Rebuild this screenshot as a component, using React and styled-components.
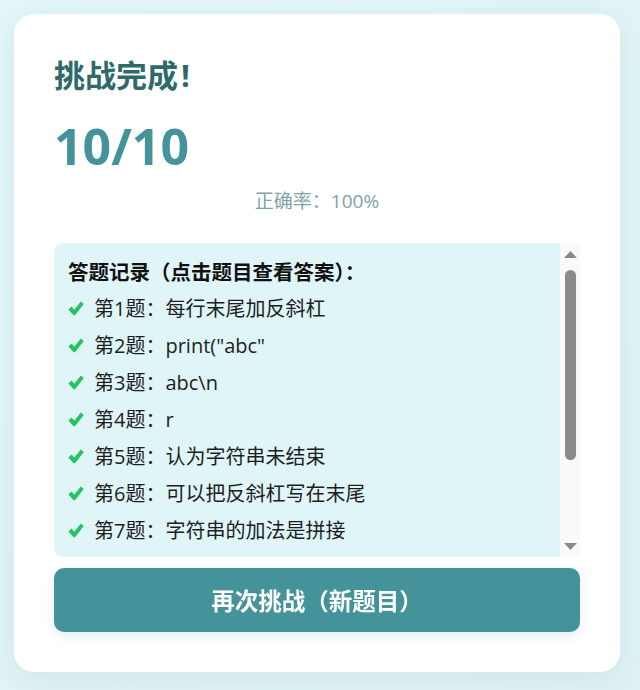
import React from "react";
import styled, { createGlobalStyle } from "styled-components";

const Global = createGlobalStyle`
  html, body { margin: 0; padding: 0; }
  body {
    background: linear-gradient(135deg, #e4f5f6 0%, #dff2f3 100%);
    font-family: "Open Sans", "Noto Sans CJK SC", sans-serif;
    min-height: 690px;
  }
`;

const Page = styled.div`
  padding: 14px 20px 18px 14px;
  box-sizing: border-box;
`;

const Card = styled.div`
  background: #ffffff;
  border-radius: 20px;
  padding: 40px;
  box-shadow: 0 6px 24px rgba(70, 150, 155, 0.12);
  display: flex;
  flex-direction: column;
`;

const Title = styled.h2`
  margin: 0;
  font-size: 31px;
  line-height: 42px;
  font-weight: 700;
  color: #2f6a6b;
`;

const Bang = styled.span`
  margin-left: 3px;
`;

const Score = styled.div`
  margin-top: 18px;
  font-size: 50px;
  line-height: 64px;
  font-weight: 700;
  color: #45939a;
`;

const Rate = styled.div`
  margin-top: 9px;
  text-align: center;
  font-size: 19px;
  line-height: 28px;
  color: #7fa3a6;
`;

const Records = styled.div`
  margin-top: 28px;
  height: 314px;
  display: flex;
`;

const List = styled.div`
  flex: 1;
  min-width: 0;
  overflow-y: auto;
  scrollbar-width: none;
  background: #dff5f7;
  border-radius: 10px 0 0 10px;
  padding: 14px;
  box-sizing: border-box;
`;

const Rail = styled.div`
  width: 20px;
  background: #fafafa;
  display: flex;
  flex-direction: column;
  align-items: center;
`;

const Arrow = styled.div`
  height: 22px;
  width: 100%;
  display: flex;
  align-items: center;
  justify-content: center;
  color: #8a8a8a;
`;

const Track = styled.div`
  flex: 1;
  width: 100%;
  padding-top: 5px;
  display: flex;
  justify-content: center;
`;

const Thumb = styled.div`
  width: 11px;
  height: 190px;
  border-radius: 6px;
  background: #8a8a8a;
`;

const RecordsHead = styled.div`
  font-size: 20.5px;
  line-height: 30px;
  font-weight: 700;
  color: #111;
  margin-bottom: 3px;
`;

const Item = styled.div`
  display: flex;
  align-items: center;
  gap: 10px;
  font-size: 20px;
  line-height: 27px;
  padding: 5px 0;
  color: #1e1e1e;
  cursor: pointer;
`;

const Check = styled.span`
  width: 16px;
  display: flex;
  align-items: center;
  justify-content: center;
  color: #22c55e;
`;

const Retry = styled.button`
  margin-top: 11px;
  height: 64px;
  border: none;
  border-radius: 10px;
  background: #45939a;
  color: #fff;
  font-family: "Open Sans", "Noto Sans CJK SC", sans-serif;
  font-size: 23.5px;
  font-weight: 700;
  box-shadow: 0 4px 12px rgba(69, 147, 154, 0.15);
  cursor: pointer;
`;

const answers = [
  "每行末尾加反斜杠",
  'print("abc"',
  "abc\\n",
  "r",
  "认为字符串未结束",
  "可以把反斜杠写在末尾",
  "字符串的加法是拼接",
  "三引号可以跨行",
  "len 返回长度",
  "用 + 连接字符串",
];

const CheckIcon = () => (
  <svg width="16" height="15" viewBox="0 0 16 15" aria-hidden="true">
    <path
      d="M0.4 8.4 L3.6 5.6 L6.3 8.8 L12.8 0.6 L15.8 3.0 L7.0 14.2 L5.6 14.2 Z"
      fill="currentColor"
    />
  </svg>
);

const UpTri = () => (
  <svg width="13" height="7" viewBox="0 0 13 7" aria-hidden="true">
    <path d="M0 7 L6.5 0 L13 7 Z" fill="currentColor" />
  </svg>
);

const DownTri = () => (
  <svg width="13" height="7" viewBox="0 0 13 7" aria-hidden="true">
    <path d="M0 0 L13 0 L6.5 7 Z" fill="currentColor" />
  </svg>
);

export default function App() {
  return (
    <>
      <Global />
      <Page>
        <Card>
          <Title>
            挑战完成<Bang>!</Bang>
          </Title>
          <Score>10/10</Score>
          <Rate>正确率：100%</Rate>
          <Records>
            <List>
              <RecordsHead>答题记录（点击题目查看答案）：</RecordsHead>
              {answers.map((a, i) => (
                <Item key={i}>
                  <Check>
                    <CheckIcon />
                  </Check>
                  <span>第{i + 1}题：{a}</span>
                </Item>
              ))}
            </List>
            <Rail>
              <Arrow>
                <UpTri />
              </Arrow>
              <Track>
                <Thumb />
              </Track>
              <Arrow>
                <DownTri />
              </Arrow>
            </Rail>
          </Records>
          <Retry>再次挑战（新题目）</Retry>
        </Card>
      </Page>
    </>
  );
}
